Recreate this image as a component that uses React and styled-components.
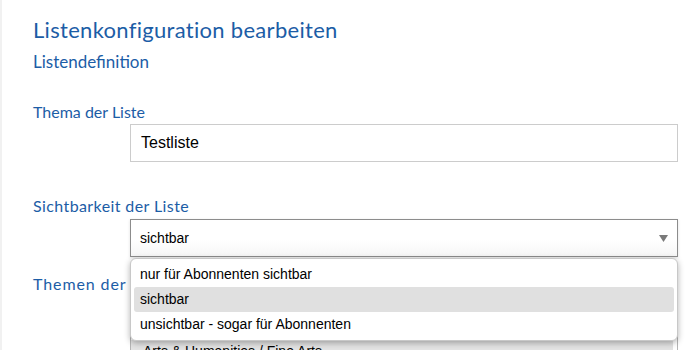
import React from "react";
import styled, { createGlobalStyle } from "styled-components";

const Global = createGlobalStyle`
  html, body { margin: 0; padding: 0; background: #fff; }
  body { width: 690px; height: 350px; overflow: hidden; }
`;

const Page = styled.div`
  box-sizing: border-box;
  height: 350px;
  overflow: hidden;
  border-left: 2px solid #f1f1f1;
  padding: 17px 12px 0 31px;
  font-family: Lato, "Open Sans", sans-serif;
  color: #1c5da6;
`;

const Title = styled.h1`
  margin: 0;
  font-size: 22px;
  line-height: 26px;
  font-weight: 400;
  letter-spacing: 0.3px;
`;

const Subtitle = styled.h2`
  margin: 9px 0 0;
  font-size: 17px;
  line-height: 20px;
  font-weight: 400;
`;

const Group = styled.div`
  margin-top: ${(p) => p.$gap}px;
`;

const Label = styled.div`
  font-size: 16px;
  line-height: 20px;
  white-space: nowrap;
  letter-spacing: ${(p) => p.$spacing ?? 0}px;
`;

const Field = styled.div`
  position: relative;
  margin: ${(p) => p.$top ?? 2}px 0 0 97px;
`;

const TextInput = styled.div`
  box-sizing: border-box;
  height: 38px;
  border: 1px solid #cccccc;
  padding: 0 10px;
  display: flex;
  align-items: center;
  font-family: "Liberation Sans", Arial, sans-serif;
  font-size: 16px;
  color: #000;
  background: #fff;
`;

const Select = styled.div`
  box-sizing: border-box;
  height: 38px;
  border: 1px solid #8c8c8c;
  padding: 0 9px 0 9px;
  display: flex;
  align-items: center;
  justify-content: space-between;
  font-family: "Liberation Sans", Arial, sans-serif;
  font-size: 14px;
  color: #000;
  background: linear-gradient(#ffffff 55%, #f6f6f6);
  box-shadow: 0 1px 3px rgba(0, 0, 0, 0.12);
`;

const Menu = styled.div`
  position: absolute;
  top: calc(100% + 1px);
  left: 0;
  right: 0;
  z-index: 5;
  box-sizing: border-box;
  padding: 3px;
  background: #fff;
  border: 1px solid #c8c8c8;
  border-radius: 6px;
  box-shadow: 0 2px 6px rgba(0, 0, 0, 0.3);
  font-family: "Liberation Sans", Arial, sans-serif;
  font-size: 14px;
  color: #000;
`;

const Option = styled.div`
  height: 25px;
  line-height: 25px;
  padding-left: 6px;
  border-radius: 3px;
  background: ${(p) => (p.$active ? "#e0e0e0" : "transparent")};
`;

const ListBox = styled.div`
  box-sizing: border-box;
  height: 80px;
  border: 1px solid #b5b5b5;
  background: #fff;
  padding: 1px 4px 0 0;
  font-family: "Liberation Sans", Arial, sans-serif;
  font-size: 14px;
  color: #000;
`;

const ListItem = styled.div`
  height: 22px;
  line-height: 22px;
  padding-left: 12px;
  background: ${(p) => (p.$selected ? "#e3e3e3" : "transparent")};
`;

const Arrow = () => (
  <svg width="9" height="7" viewBox="0 0 9 7">
    <path d="M0 0 H9 L4.5 7 Z" fill="#7a7a7a" />
  </svg>
);

export default function App() {
  return (
    <>
      <Global />
      <Page>
        <Title>Listenkonfiguration bearbeiten</Title>
        <Subtitle>Listendefinition</Subtitle>

        <Group $gap={30}>
          <Label>Thema der Liste</Label>
          <Field>
            <TextInput>Testliste</TextInput>
          </Field>
        </Group>

        <Group $gap={34}>
          <Label $spacing={0.4}>Sichtbarkeit der Liste</Label>
          <Field $top={3}>
            <Select>
              <span>sichtbar</span>
              <Arrow />
            </Select>
            <Menu>
              <Option>nur für Abonnenten sichtbar</Option>
              <Option $active>sichtbar</Option>
              <Option>unsichtbar - sogar für Abonnenten</Option>
            </Menu>
          </Field>
        </Group>

        <Group $gap={17}>
          <Label $spacing={0.9}>Themen der Liste</Label>
          <Field $top={0}>
            <ListBox>
              <ListItem>Agriculture</ListItem>
              <ListItem>Architecture</ListItem>
              <ListItem $selected>Arts &amp; Humanities / Fine Arts</ListItem>
            </ListBox>
          </Field>
        </Group>
      </Page>
    </>
  );
}
